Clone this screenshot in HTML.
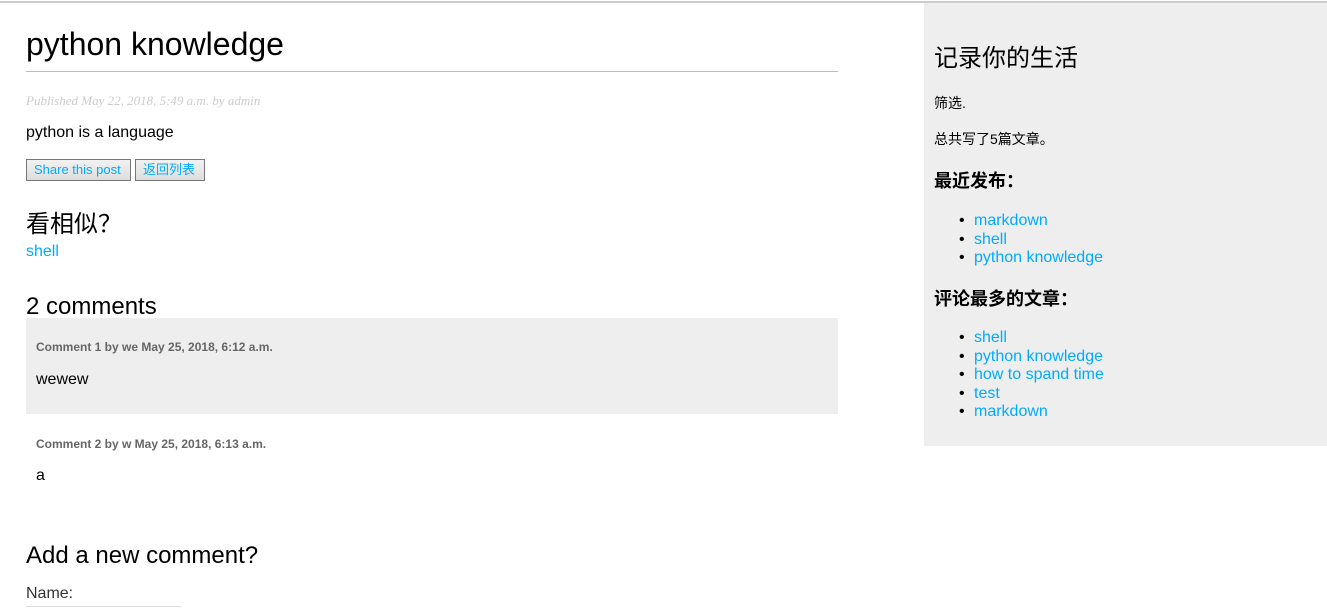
<!DOCTYPE html>
<html><head><meta charset="utf-8"><style>
*{margin:0;padding:0;box-sizing:border-box}
body{width:1327px;height:608px;overflow:hidden;background:#fff;font-family:"Liberation Sans","Noto Sans CJK SC",sans-serif;color:#000;position:relative}
.a{position:absolute;white-space:nowrap;line-height:1}
a,.l{color:#00abff;text-decoration:none}
.side{position:absolute;left:924px;top:3px;width:403px;height:443px;background:#eee}
.btn{position:absolute;top:159px;height:22px;border:1px solid #777;background:linear-gradient(#f2f2f2,#ddd);font-size:13px;color:#00abff;line-height:20px;padding:0 7px}
.ch{font-size:12px;font-weight:bold;color:#666}
.cj{font-family:"WenQuanYi Zen Hei",sans-serif}
.li{display:inline-block;width:15px}
</style></head><body>
<div style="position:absolute;left:0;top:1px;width:1327px;height:2px;background:#ccc"></div>
<div class="a" style="left:26px;top:28px;font-size:32px">python knowledge</div>
<div style="position:absolute;left:26px;top:71px;width:812px;height:1px;background:#bbb"></div>
<div class="a" style="left:26px;top:94px;font-size:13px;font-style:italic;color:#ccc;font-family:'Liberation Serif',serif">Published May 22, 2018, 5:49 a.m. by admin</div>
<div class="a" style="left:26px;top:125px;font-size:16px">python is a language</div>
<div class="btn" style="left:26px;width:105px">Share this post</div>
<div class="btn" style="left:135px;width:70px">返回列表</div>
<div class="a" style="left:26px;top:213px;font-size:24px">看相似<span class="cj">？</span></div>
<div class="a l" style="left:26px;top:244px;font-size:16px">shell</div>
<div class="a" style="left:26px;top:295px;font-size:24px">2 comments</div>
<div style="position:absolute;left:26px;top:318px;width:812px;height:96px;background:#eee"></div>
<div class="a ch" style="left:36px;top:341px">Comment 1 by we May 25, 2018, 6:12 a.m.</div>
<div class="a" style="left:36px;top:372px;font-size:16px">wewew</div>
<div class="a ch" style="left:36px;top:438px">Comment 2 by w May 25, 2018, 6:13 a.m.</div>
<div class="a" style="left:36px;top:468px;font-size:16px">a</div>
<div class="a" style="left:26px;top:544px;font-size:24px">Add a new comment?</div>
<div class="a" style="left:26px;top:586px;font-size:16px;color:#333">Name:</div>
<div style="position:absolute;left:26px;top:606px;width:155px;height:1px;background:#ddd"></div>
<div class="side"></div>
<div class="a" style="left:934px;top:47px;font-size:24px">记录你的生活</div>
<div class="a" style="left:934px;top:96px;font-size:14px">筛选.</div>
<div class="a" style="left:934px;top:132px;font-size:14px">总共写了5篇文章。</div>
<div class="a" style="left:934px;top:172px;font-size:18px;font-weight:bold">最近发布<span class="cj">：</span></div>
<div class="a" style="left:959px;top:212px;font-size:16px;line-height:18.5px">
<span class="li">•</span><span class="l">markdown</span><br><span class="li">•</span><span class="l">shell</span><br><span class="li">•</span><span class="l">python knowledge</span></div>
<div class="a" style="left:934px;top:290px;font-size:18px;font-weight:bold">评论最多的文章<span class="cj">：</span></div>
<div class="a" style="left:959px;top:329px;font-size:16px;line-height:18.5px">
<span class="li">•</span><span class="l">shell</span><br><span class="li">•</span><span class="l">python knowledge</span><br><span class="li">•</span><span class="l">how to spand time</span><br><span class="li">•</span><span class="l">test</span><br><span class="li">•</span><span class="l">markdown</span></div>
</body></html>
